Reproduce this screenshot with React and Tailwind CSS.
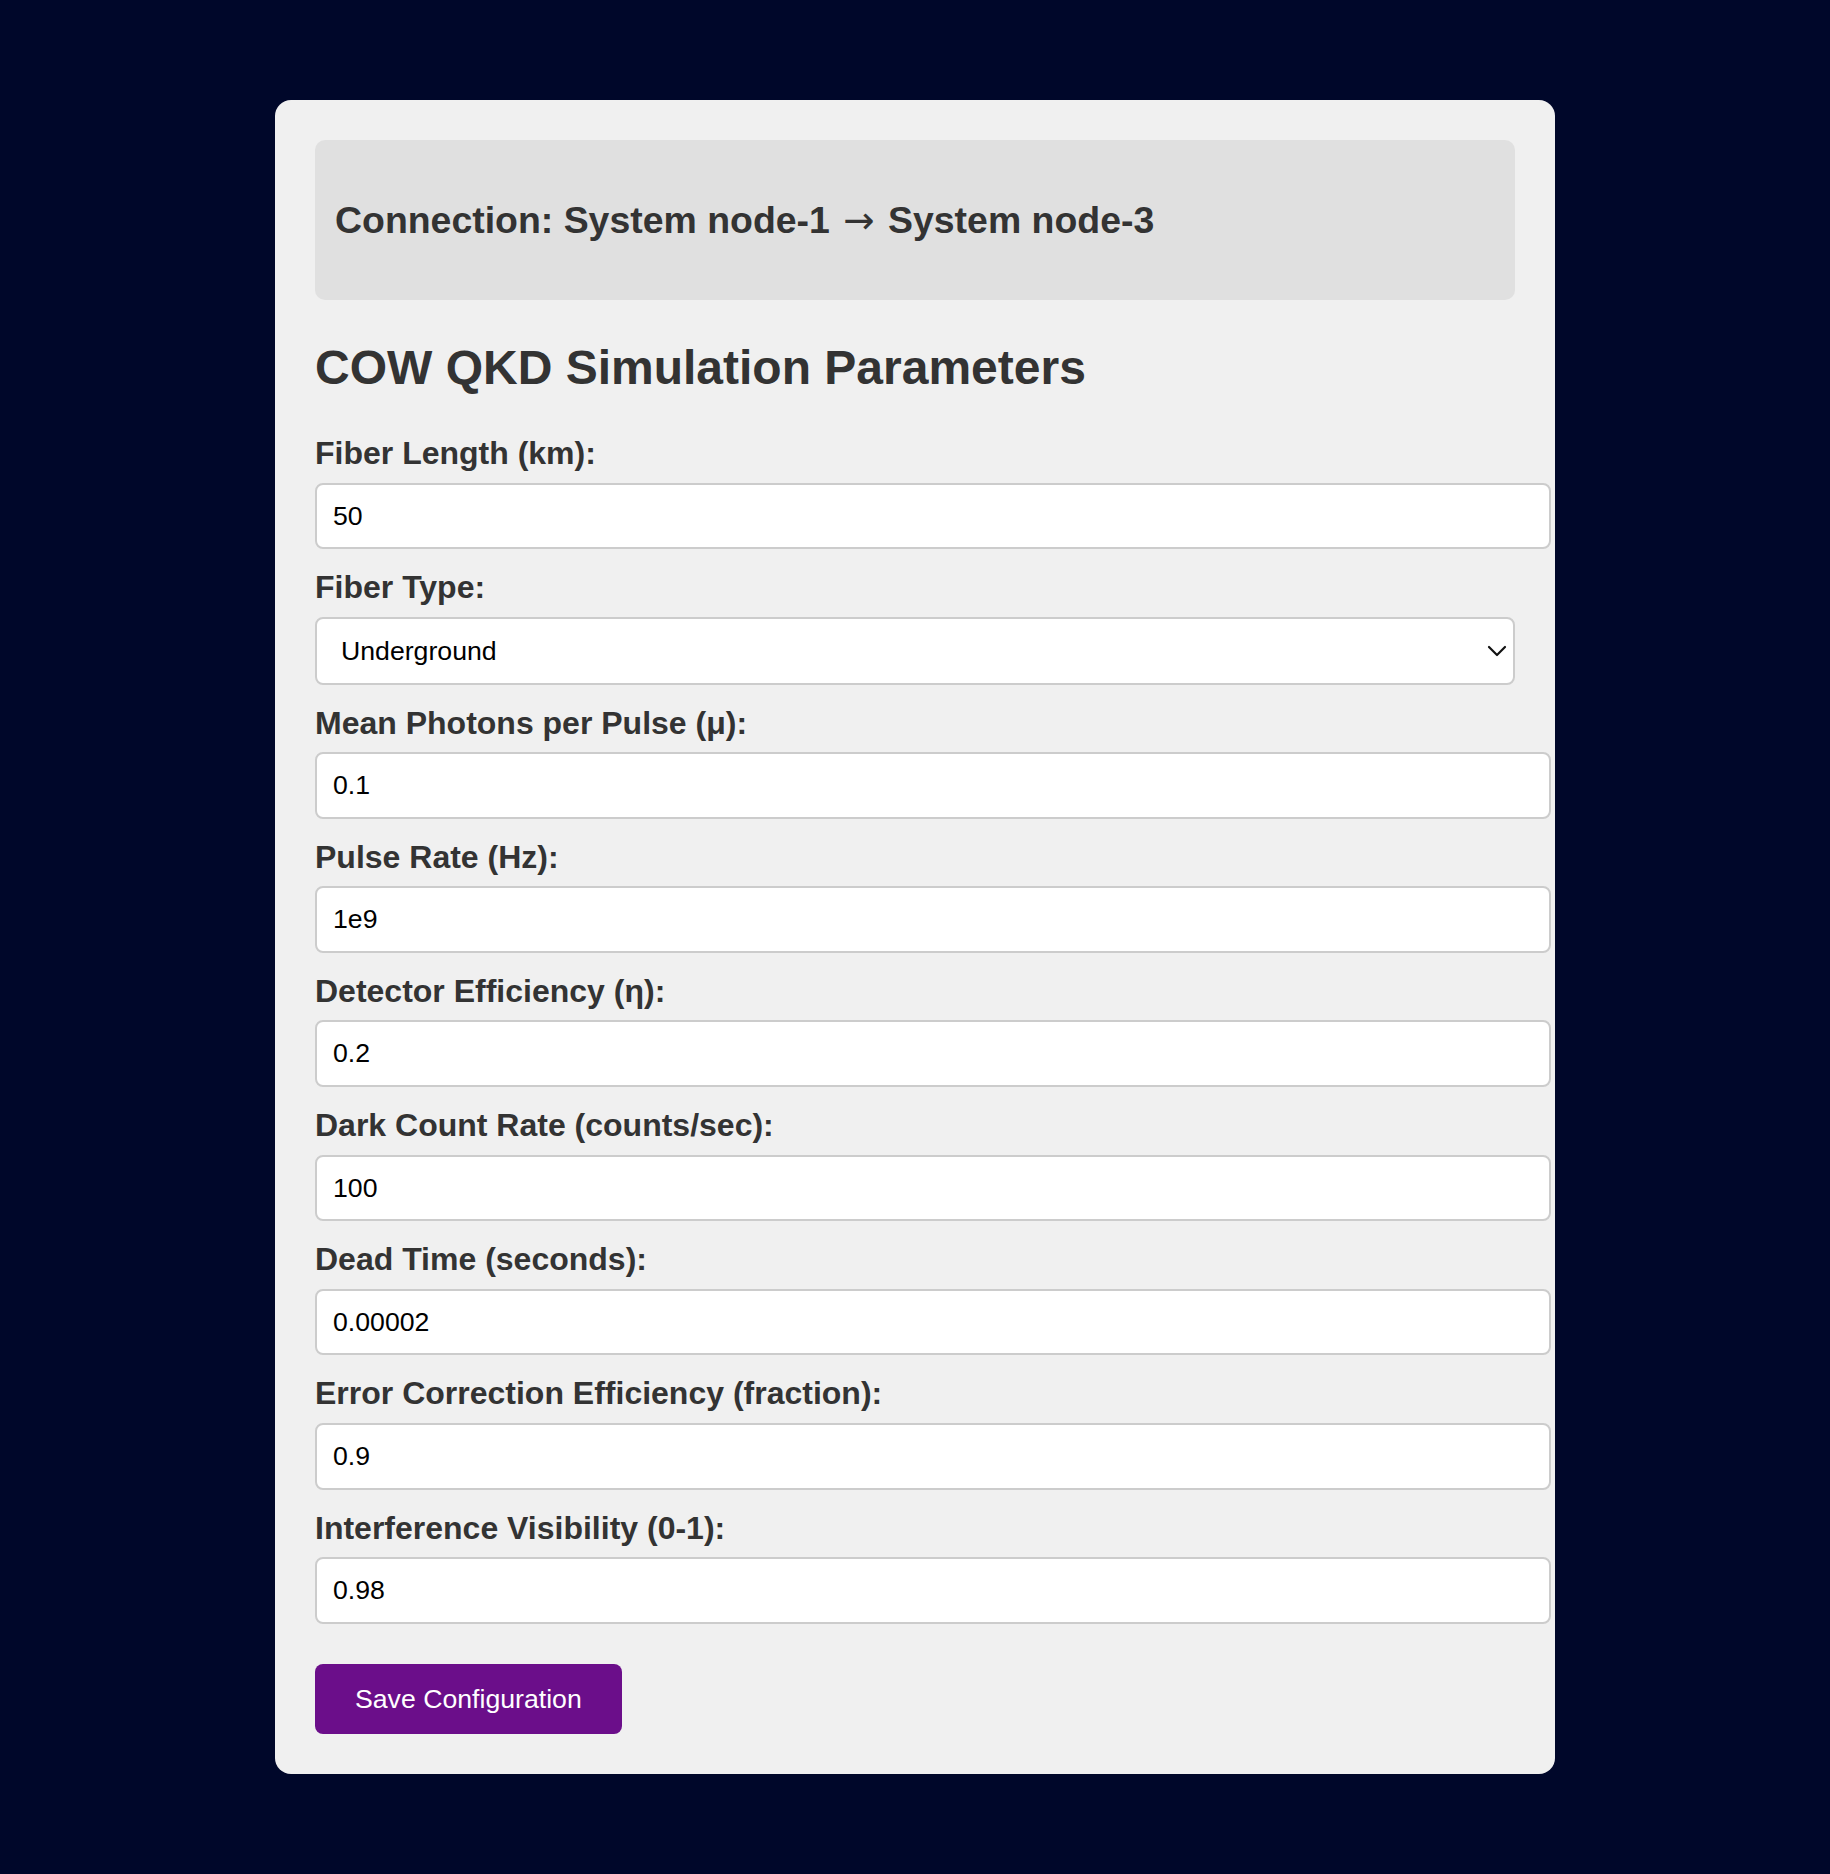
import React from "react";

const fields = [
  { label: "Fiber Length (km):", value: "50" },
  { label: "Fiber Type:", select: true, value: "Underground" },
  { label: "Mean Photons per Pulse (μ):", value: "0.1" },
  { label: "Pulse Rate (Hz):", value: "1e9" },
  { label: "Detector Efficiency (η):", value: "0.2" },
  { label: "Dark Count Rate (counts/sec):", value: "100" },
  { label: "Dead Time (seconds):", value: "0.00002" },
  { label: "Error Correction Efficiency (fraction):", value: "0.9" },
  { label: "Interference Visibility (0-1):", value: "0.98" },
];

export default function App() {
  return (
    <div
      className="min-h-[1874px] w-full bg-[#00072a] pt-[100px] pb-[99px]"
      style={{ fontFamily: '"Liberation Sans", Arial, Helvetica, sans-serif' }}
    >
      <div className="mx-auto w-[1280px] rounded-[16px] bg-[#f0f0f0] p-[40px] text-[#333333]">
        <div className="rounded-[10px] bg-[#e0e0e0] px-[20px] py-[20px]">
          <h3 className="my-[37px] text-[37.44px] leading-[46px] font-bold">
            Connection: System node-1{" "}
            <span
              className="mx-[3px] font-normal"
              style={{ fontFamily: '"DejaVu Sans", sans-serif' }}
            >
              →
            </span>{" "}
            System node-3
          </h3>
        </div>
        <h2 className="mt-[40px] mb-[40px] text-[48px] leading-[55px] font-bold">
          COW QKD Simulation Parameters
        </h2>
        {fields.map((f) => (
          <div key={f.label} className="mb-[20px]">
            <label className="mb-[10px] block text-[32px] leading-[37.5px] font-bold">
              {f.label}
            </label>
            {f.select ? (
              <div className="relative w-full">
                <select
                  defaultValue={f.value}
                  className="h-[68px] w-full appearance-none rounded-[8px] border-2 border-[#cccccc] bg-white pl-[24px] pr-[60px] text-[26.67px] text-black outline-none"
                  style={{ fontFamily: '"Liberation Sans", Arial, Helvetica, sans-serif' }}
                >
                  <option>Underground</option>
                  <option>Aerial</option>
                  <option>Submarine</option>
                </select>
                <svg
                  className="pointer-events-none absolute right-[8px] top-1/2 -translate-y-1/2"
                  width="20"
                  height="12"
                  viewBox="0 0 20 12"
                  fill="none"
                >
                  <path d="M2 2 L10 10 L18 2" stroke="#111" strokeWidth="2.2" strokeLinecap="round" strokeLinejoin="round" />
                </svg>
              </div>
            ) : (
              <input
                type="text"
                defaultValue={f.value}
                className="box-content block w-full rounded-[8px] border-2 border-[#cccccc] bg-white px-[16px] py-[16px] text-[26.67px] leading-[30.67px] text-black outline-none"
                style={{ fontFamily: '"Liberation Sans", Arial, Helvetica, sans-serif' }}
              />
            )}
          </div>
        ))}
        <button
          className="mt-[20px] rounded-[8px] bg-[#6b0e8a] px-[40px] py-[20px] text-[26.67px] leading-[30.67px] text-white"
          style={{ fontFamily: '"Liberation Sans", Arial, Helvetica, sans-serif' }}
        >
          Save Configuration
        </button>
      </div>
    </div>
  );
}
